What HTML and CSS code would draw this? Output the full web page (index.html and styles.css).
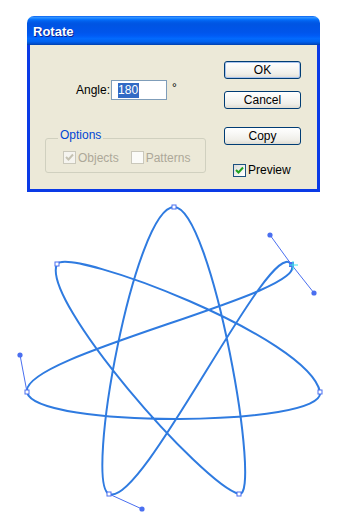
FILE: index.html
```html
<!DOCTYPE html>
<html>
<head>
<meta charset="utf-8">
<link rel="stylesheet" href="styles.css">
</head>
<body>
<div class="dialog">
  <div class="titlebar"><span class="title">Rotate</span></div>
  <div class="content">
    <div class="left">
      <div class="angle-row">
        <span class="label">Angle:</span>
        <div class="input"><span class="sel">180</span></div>
        <span class="deg">°</span>
      </div>
      <div class="group">
        <span class="legend">Options</span>
        <div class="checks">
          <span class="cb dis-box"><svg viewBox="0 0 11 11" class="tick"><polyline points="2,5 4.5,7.5 9,2.5" fill="none" stroke="#c5c2b2" stroke-width="2"/></svg></span>
          <span class="dis-text">Objects</span>
          <span class="cb dis-box second"></span>
          <span class="dis-text">Patterns</span>
        </div>
      </div>
    </div>
    <div class="right">
      <button class="btn default">OK</button>
      <button class="btn cancel">Cancel</button>
      <button class="btn copy">Copy</button>
      <div class="preview">
        <span class="cb on"><svg viewBox="0 0 11 11" class="tick"><polyline points="2,5 4.5,7.5 9,2.5" fill="none" stroke="#21a121" stroke-width="2"/></svg></span>
        <span class="ptext">Preview</span>
      </div>
    </div>
  </div>
</div>
<svg class="art" width="343" height="327" viewBox="0 192 343 327">
  <path class="curve" d="M174,207 C212,207 263,500 239,494 C203,485 40,300 57,264 C70,247 309,337 320,392 C327,427 34,429 27,392 C20,355 314,293 291,264 C270,235 142,509 109,494 C84,483 135,207 174,207 Z"/>
  <g class="handles">
    <line x1="27" y1="392" x2="20" y2="355"/>
    <line x1="291" y1="264" x2="270" y2="235"/>
    <line x1="291" y1="264" x2="314" y2="293"/>
    <line x1="109" y1="494" x2="142" y2="509"/>
  </g>
  <g class="dots">
    <circle cx="20" cy="355" r="2.6"/>
    <circle cx="270" cy="235" r="2.6"/>
    <circle cx="314" cy="293" r="2.6"/>
    <circle cx="142" cy="509" r="2.6"/>
  </g>
  <g class="anchors">
    <rect x="172" y="205" width="4" height="4"/>
    <rect x="237" y="492" width="4" height="4"/>
    <rect x="55" y="262" width="4" height="4"/>
    <rect x="318" y="390" width="4" height="4"/>
    <rect x="25" y="390" width="4" height="4"/>
    <rect x="107" y="492" width="4" height="4"/>
  </g>
  <rect class="sel-anchor" x="289" y="262" width="5" height="5"/>
  <g class="cursor">
    <line x1="293" y1="261" x2="293" y2="270"/>
    <line x1="289" y1="265" x2="298" y2="265"/>
  </g>
</svg>
</body>
</html>
```
FILE: styles.css
```css
html, body {
  margin: 0;
  padding: 0;
  background: #ffffff;
}
body {
  font-family: "Liberation Sans", Arial, sans-serif;
  font-size: 12px;
  color: #000;
  width: 343px;
  height: 519px;
  overflow: hidden;
}
.dialog {
  margin: 16px 0 0 27px;
  width: 293px;
  height: 176px;
  box-sizing: border-box;
  display: flex;
  flex-direction: column;
}
.titlebar {
  height: 29px;
  box-sizing: border-box;
  padding: 3px 0 0 6px;
  border-radius: 7px 7px 0 0;
  background: linear-gradient(to bottom, #0058ee 0%, #3593ff 4%, #288eff 7%, #127dff 10%, #036ffc 13%, #0262ee 17%, #0057e5 24%, #0054e3 30%, #0055eb 56%, #005bf5 68%, #026afe 78%, #0062ef 88%, #0052d6 94%, #0040ab 100%);
}
.title {
  display: block;
  color: #fff;
  font-weight: bold;
  font-size: 13px;
  line-height: 26px;
  text-shadow: 1px 1px 0 #0a1e8c;
}
.content {
  flex: 1;
  display: flex;
  background: #ece9d8;
  border: 3px solid #0a3ae6;
  border-top: none;
  padding-top: 16px;
}
.left {
  width: 194px;
  display: flex;
  flex-direction: column;
}
.angle-row {
  margin: 19px 0 0 46px;
  height: 20px;
  display: flex;
  align-items: center;
}
.label {
  line-height: 14px;
}
.input {
  margin-left: 1px;
  width: 56px;
  height: 20px;
  box-sizing: border-box;
  border: 1px solid #7f9db9;
  background: #fff;
  display: flex;
  align-items: center;
  padding-left: 6px;
}
.sel {
  background: #316ac5;
  color: #fff;
  line-height: 15px;
  padding: 0 1px 0 0;
}
.deg {
  margin-left: 5px;
  align-self: flex-start;
  line-height: 14px;
  margin-top: 1px;
}
.group {
  margin: 38px 0 0 15px;
  width: 161px;
  height: 35px;
  box-sizing: border-box;
  border: 1px solid #d0d0bf;
  border-radius: 3px;
}
.legend {
  display: block;
  width: fit-content;
  margin: -11px 0 0 12px;
  padding: 0 2px;
  background: #ece9d8;
  color: #0046d5;
  line-height: 14px;
}
.checks {
  margin: 9px 0 0 17px;
  display: flex;
  align-items: center;
  height: 13px;
}
.cb {
  width: 13px;
  height: 13px;
  box-sizing: border-box;
  display: inline-flex;
  align-items: center;
  justify-content: center;
  flex: none;
}
.tick {
  width: 11px;
  height: 11px;
  display: block;
}
.dis-box {
  border: 1px solid #cac8bb;
  background: #f5f4ef;
}
.dis-box.second {
  margin-left: 12px;
  background: #fbfbf8;
}
.dis-text {
  margin-left: 2px;
  color: #aca899;
  line-height: 14px;
}
.right {
  display: flex;
  flex-direction: column;
  align-items: flex-start;
}
.btn {
  width: 77px;
  height: 18px;
  padding: 0;
  margin: 0;
  font-family: "Liberation Sans", Arial, sans-serif;
  font-size: 12px;
  line-height: 16px;
  color: #000;
  border: 1px solid #003c74;
  border-radius: 3px;
  background: linear-gradient(to bottom, #ffffff 0%, #f7f7f4 40%, #efeee8 75%, #dedcd2 100%);
}
.btn.default {
  box-shadow: inset 0 0 0 1px #a9c4ee;
}
.btn.cancel {
  margin-top: 12px;
}
.btn.copy {
  margin-top: 18px;
}
.preview {
  margin: 18px 0 0 9px;
  display: flex;
  align-items: center;
}
.cb.on {
  border: 1px solid #1c5180;
  background: linear-gradient(135deg, #dcdcd7 0%, #ffffff 90%);
}
.ptext {
  margin-left: 2px;
  line-height: 14px;
}
.art {
  display: block;
}
.curve {
  fill: none;
  stroke: #2f7be0;
  stroke-width: 2;
}
.handles line {
  stroke: #4a6ff0;
  stroke-width: 1;
}
.dots circle {
  fill: #4a6ff0;
}
.anchors rect {
  fill: #fff;
  stroke: #4a6ff0;
  stroke-width: 1;
}
.sel-anchor {
  fill: #4a6ff0;
}
.cursor line {
  stroke: #3ee6e6;
  stroke-width: 1;
}
```
